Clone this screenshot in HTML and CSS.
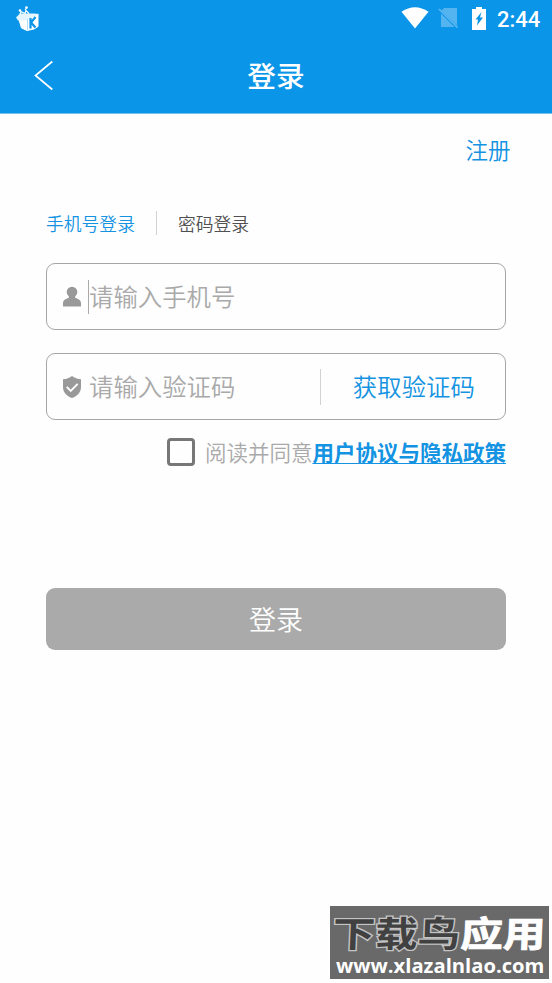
FILE: index.html
```html
<!DOCTYPE html>
<html lang="zh-CN">
<head>
<meta charset="utf-8">
<title>登录</title>
<link rel="stylesheet" href="styles.css">
</head>
<body>
<div class="screen">
  <header class="header">
    <div class="statusbar">
      <svg class="app-icon" width="26" height="28" viewBox="0 0 26 28">
        <path d="M3.500 13l9 .5L23 9v12.500l-4 2.500-7 1.500-5.500-2.500z" fill="#fff" stroke="#fff" stroke-width="1" stroke-linejoin="round"/>
        <path d="M1 12.500l4-4h15l4 1-10.500 4.500-3 1.500H3z" fill="#e4f5ff"/>
        <path d="M12.500 14v11" stroke="#7cc7f4" stroke-width=".6"/>
        <path d="M5 9.500l1-3 4 2 1-3 3 3M10 5l2-2.500" fill="none" stroke="#fff" stroke-width="1.200"/>
        <circle cx="5" cy="5.500" r="1.300" fill="#fff"/><circle cx="11.500" cy="2.500" r="1.300" fill="#fff"/>
        <path d="M15.500 13v10.500M20.500 12l-4.500 5.500 4.500 5" fill="none" stroke="#0a95e9" stroke-width="2.200"/>
      </svg>
      <div class="status-icons">
        <svg class="wifi" width="28" height="22" viewBox="0 0 28 22"><path d="M.5 4.700Q14-4.400 27.500 4.700L14 21.500z" fill="#fff"/></svg>
        <svg class="sim" width="21" height="22" viewBox="0 0 21 22"><path d="M6 1h13v17.500L3.500 3.500zM3 6.500V20h13.500z" fill="#54b4f0"/><path d="M1 2l18.500 18.500" stroke="#62b9f1" stroke-width="1.600"/></svg>
        <svg class="battery" width="14" height="23" viewBox="0 0 14 23"><path d="M4 0h6v2h4v21H0V2h4z" fill="#fff"/><path d="M9.500 5L3.500 12.500H6L5 18.500l6-8H8z" fill="#0a95e9"/></svg>
        <span class="clock">2:44</span>
      </div>
    </div>
    <div class="titlebar">
      <svg class="back" width="20" height="32" viewBox="0 0 20 32"><path d="M18.300 1.500L1.500 15.500l16.800 14" fill="none" stroke="#fff" stroke-width="1.700"/></svg>
      <h1 class="title">登录</h1>
    </div>
  </header>
  <main class="content">
    <a class="register">注册</a>
    <nav class="tabs">
      <span class="tab active">手机号登录</span>
      <span class="tab-divider"></span>
      <span class="tab">密码登录</span>
    </nav>
    <div class="field">
      <svg class="field-icon" width="20" height="22" viewBox="0 0 20 22"><circle cx="10" cy="6" r="5.300" fill="#999"/><path d="M1 20.500v-3.200c0-3 2.500-4.600 5.800-5.300V9h6.400v3c3.300.7 5.800 2.300 5.800 5.300v3.200z" fill="#999"/></svg>
      <span class="caret"></span>
      <span class="placeholder">请输入手机号</span>
    </div>
    <div class="field code-field">
      <svg class="field-icon" width="20" height="22" viewBox="0 0 20 22"><path d="M10 0c2.500 2 5.500 3 9 3.300V11c0 5.500-3.500 9-9 11-5.500-2-9-5.500-9-11V3.300C4.500 3 7.500 2 10 0z" fill="#999"/><path d="M4.700 10.800l4 4 7-7" fill="none" stroke="#fff" stroke-width="1.900"/></svg>
      <span class="caret hidden"></span>
      <span class="placeholder">请输入验证码</span>
      <span class="field-divider"></span>
      <span class="get-code">获取验证码</span>
    </div>
    <div class="agreement">
      <span class="checkbox"></span>
      <span class="agree-text">阅读并同意</span><a class="policy">用户协议与隐私政策</a>
    </div>
    <div class="submit">登录</div>
  </main>
  <aside class="watermark">
    <div class="mark-row">
      <span class="mark-dark">下载鸟</span><span class="mark-light">应用</span>
    </div>
    <div class="mark-url">www.xlazalnlao.com</div>
  </aside>
</div>
</body>
</html>
```
FILE: styles.css
```css
* { box-sizing: border-box; }
body {
  margin: 0;
  background: #fefefe;
  font-family: "Noto Sans CJK SC", sans-serif;
  font-weight: 350;
}
.screen { position: relative; width: 552px; height: 983px; overflow: hidden; }
.header { height: 114px; background: #0a95e9; border-bottom: 1px solid #70c0f1; color: #fff; }
.statusbar { display: flex; justify-content: space-between; height: 38px; padding: 5px 12px 0 15px; }
.status-icons { display: flex; align-items: flex-start; }
.wifi { margin-top: 2px; }
.sim { margin: 2px 0 0 9px; }
.battery { margin: 2px 0 0 13px; }
.clock { margin-left: 11px; width: 43px; font: 500 22px/29px Roboto, sans-serif; white-space: nowrap; }
.titlebar { display: grid; grid-template-columns: 60px 1fr 60px; align-items: center; height: 75px; }
.back { margin-left: 34px; }
.title { margin: -2px 0 0; text-align: center; font-size: 28.700px; line-height: 40px; font-weight: 500; }
.content { display: flex; flex-direction: column; padding: 19px 46px 0; }
.register { align-self: flex-end; margin-right: -4.500px; font-size: 22.500px; line-height: 32px; color: #1393e2; }
.tabs { display: flex; align-items: center; height: 26px; margin-top: 45px; font-size: 17.800px; line-height: 26px; color: #505050; }
.active { color: #1393e2; }
.tab-divider { width: 1px; height: 24px; margin: 0 21px; background: #d2d2d2; }
.field { display: flex; align-items: center; height: 67px; margin-top: 27px; padding: 0 15px; border: 1.500px solid #a6a6a6; border-radius: 9px; }
.code-field { margin-top: 23px; }
.field-icon { flex: none; }
.caret { width: 1px; height: 34px; margin-left: 6px; background: #aaa; }
.hidden { visibility: hidden; }
.placeholder { margin-top: -1px; font-size: 24.400px; line-height: 36px; color: #a9a9a9; }
.field-divider { width: 1px; height: 36px; margin-left: 85px; background: #d2d2d2; }
.get-code { margin: -1px 0 0 31.500px; font-size: 24.400px; line-height: 36px; color: #1393e2; white-space: nowrap; }
.agreement { display: flex; align-items: center; justify-content: flex-end; height: 32px; margin-top: 16px; font-size: 21.500px; line-height: 32px; white-space: nowrap; }
.checkbox { width: 28px; height: 28px; margin-right: 10px; border: 3px solid #777; border-radius: 4px; }
.agree-text { color: #a9a9a9; }
.policy { color: #1393e2; font-weight: 700; text-decoration: underline; text-decoration-thickness: 1px; text-underline-offset: 2px; }
.submit { height: 62px; margin-top: 120px; border-radius: 9px; background: #aaa; color: #fff; text-align: center; font-size: 27px; line-height: 62px; }
.watermark { position: absolute; left: 330px; top: 906px; width: 219px; height: 73px; padding: 4px 0 0 3px; background: #696969; white-space: nowrap; }
.mark-row { width: 212px; height: 44px; font-size: 42.500px; font-weight: 700; line-height: 44px; transform: scaleY(.84) skewX(-2deg); }
.mark-dark { color: #414141; -webkit-text-stroke: 3px #c4c4c4; paint-order: stroke fill; }
.mark-light { color: #fff; -webkit-text-stroke: 1px #fff; }
.mark-url { margin: -1px 0 0 3px; height: 24px; font: 700 20.200px/24px "Open Sans", sans-serif; color: #fff; }
```
